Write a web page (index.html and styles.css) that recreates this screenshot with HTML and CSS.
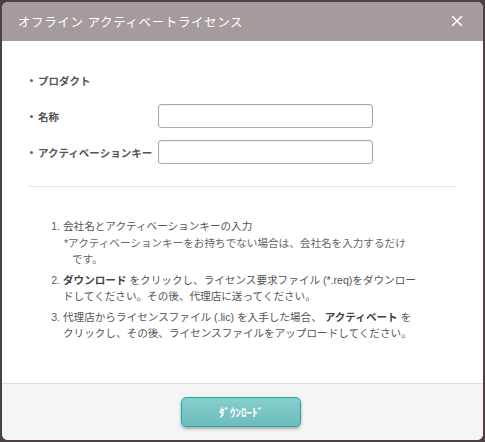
FILE: index.html
```html
<!DOCTYPE html>
<html lang="ja">
<head>
<meta charset="UTF-8">
<meta name="viewport" content="width=device-width, initial-scale=1.0">
<title>オフライン アクティベートライセンス</title>
<link rel="stylesheet" href="styles.css">
</head>
<body>

<div class="modal">
    <div class="modal-header">
        <h1 class="modal-title">オフライン アクティベートライセンス</h1>
        <button class="modal-close" type="button" aria-label="閉じる">
            <svg width="12" height="12" viewBox="0 0 12 12">
                <path d="M1.5 1.5 L10.5 10.5 M10.5 1.5 L1.5 10.5" stroke="#fff" stroke-width="1.6" stroke-linecap="round"/>
            </svg>
        </button>
    </div>

    <div class="modal-body">
        <ul class="form-rows">
            <li class="form-row">
                <span class="form-label">プロダクト</span>
            </li>
            <li class="form-row">
                <span class="form-label">名称</span>
                <input class="form-input" type="text">
            </li>
            <li class="form-row">
                <span class="form-label">アクティベーションキー</span>
                <input class="form-input" type="text">
            </li>
        </ul>

        <hr class="divider">

        <ol class="steps">
            <li>会社名とアクティベーションキーの入力
                <p class="note">*アクティベーションキーをお持ちでない場合は、会社名を入力するだけです。</p>
            </li>
            <li><b>ダウンロード</b> をクリックし、ライセンス要求ファイル (*.req)をダウンロー<br>ドしてください。その後、代理店に送ってください。</li>
            <li>代理店からライセンスファイル (.lic) を入手した場合、 <b>アクティベート</b> を<br>クリックし、その後、ライセンスファイルをアップロードしてください。</li>
        </ol>
    </div>

    <div class="modal-footer">
        <button class="btn-download" type="button">ﾀﾞｳﾝﾛｰﾄﾞ</button>
    </div>
</div>

</body>
</html>
```

FILE: styles.css
```css
html, body {
    height: 100%;
}
body {
    margin: 0;
    padding: 2px;
    box-sizing: border-box;
    background-color: #4b4046;
    font-family: "Liberation Sans", "Noto Sans CJK JP", sans-serif;
    color: #555;
}
.modal {
    height: 100%;
    display: flex;
    flex-direction: column;
    background-color: #fff;
    border-radius: 6px;
    overflow: hidden;
}
.modal-header {
    height: 39px;
    flex: none;
    display: flex;
    align-items: center;
    justify-content: space-between;
    padding: 0 20px 0 16px;
    background-color: #a49b9d;
}
.modal-title {
    margin: 0;
    font-size: 12.5px;
    font-weight: normal;
    letter-spacing: 0.6px;
    color: #fff;
}
.modal-close {
    background: none;
    border: none;
    padding: 0;
    margin-top: -2px;
    cursor: pointer;
    display: flex;
}
.modal-body {
    flex: 1;
    padding: 27px 27px 0 26px;
}
.form-rows {
    list-style: none;
    margin: 0;
    padding: 0;
    display: flex;
    flex-direction: column;
    gap: 12px;
}
.form-row {
    height: 24px;
    display: flex;
    align-items: center;
}
.form-row::before {
    content: "";
    width: 3px;
    height: 3px;
    border-radius: 50%;
    background-color: #666;
    margin: 0 5px 0 2px;
}
.form-label {
    width: 120px;
    font-size: 10.5px;
    font-weight: bold;
    color: #555;
}
.form-input {
    width: 215px;
    height: 24px;
    box-sizing: border-box;
    border: 1px solid #aaa;
    border-radius: 3px;
    box-shadow: inset 0 1px 2px rgba(0,0,0,0.08);
    padding: 2px 6px;
}
.divider {
    border: none;
    border-top: 1px solid #e5e5e5;
    margin: 22px 0 0 0;
}
.steps {
    margin: 31px 0 0 0;
    padding: 0 26px 0 35px;
    font-size: 10.6px;
    line-height: 16px;
    color: #555;
}
.steps li {
    margin-bottom: 5px;
}
.steps li::marker {
    color: #66597a;
}
.steps b {
    color: #444;
}
.note {
    margin: 1px 14px 0 1px;
    padding-left: 8px;
    text-indent: -8px;
    color: #666;
}
.modal-footer {
    height: 56px;
    flex: none;
    display: flex;
    align-items: center;
    justify-content: center;
    background-color: #f4f4f4;
    border-top: 1px solid #ddd;
}
.btn-download {
    width: 120px;
    height: 30px;
    margin-left: -3px;
    border: 1px solid #25a59e;
    border-radius: 5px;
    background: linear-gradient(#86cfce, #6dbcbc);
    box-shadow: 0 2px 3px rgba(0,0,0,0.3);
    color: #fff;
    font-family: "Noto Sans CJK JP", sans-serif;
    font-size: 11px;
    font-weight: bold;
    cursor: pointer;
}
```
